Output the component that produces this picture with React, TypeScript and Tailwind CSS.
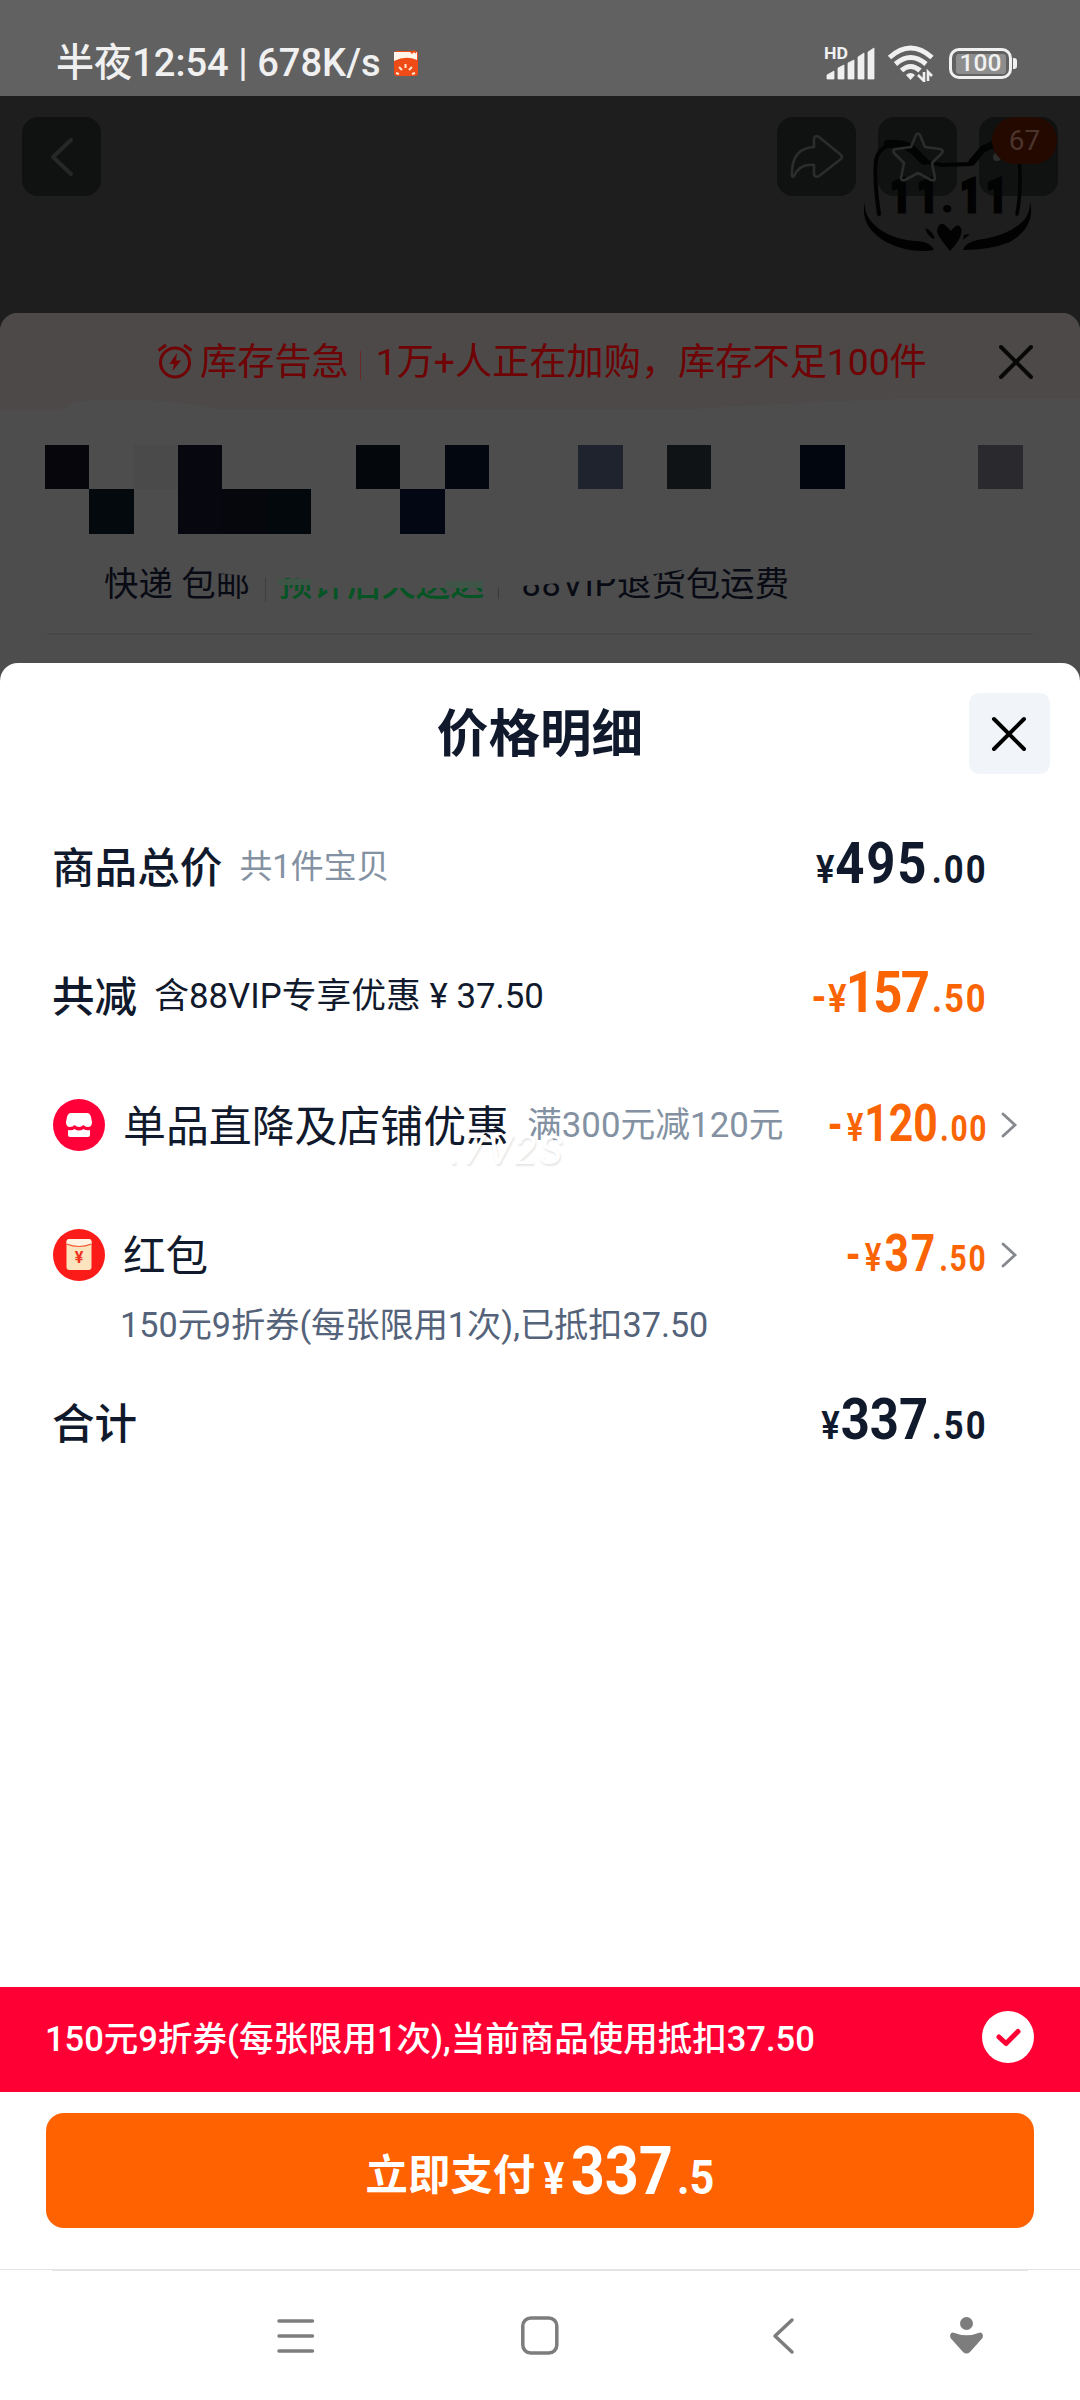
import React from "react";

const MOSAIC: string[] = [
  "bg-[#08060d]", "", "bg-[#4a4a4a]", "bg-[#06070f]", "", "", "", "bg-[#04080d]", "", "bg-[#03070f]", "", "", "bg-[#1e232d]", "", "bg-[#101315]", "", "", "bg-[#02060f]", "", "", "", "bg-[#29292e]",
  "", "bg-[#04090e]", "", "bg-[#07080f]", "bg-[#05070c]", "bg-[#03080c]", "", "", "bg-[#020713]", "", "", "", "", "", "", "", "", "", "", "", "", "",
];

function StatusBar() {
  return (
    <div className="flex h-[96px] items-start bg-[#616161] text-[#f0f0f0]">
      <div className="flex h-[48px] w-[768px] items-center pl-[56px] mt-[40px]">
        <span className="text-[38.1px] font-medium whitespace-pre">半夜12:54 | 678K/s</span>
        <svg className="ml-[12px] -mt-[2px]" width="26" height="27" viewBox="0 0 26 27">
          <rect x="1" y="1" width="24" height="25" rx="3" fill="#f04a16" />
          <path d="M1 2h23v8Q13 5 1 11z" fill="#fff5ea" />
          <path d="M17 1l2 2 2-2 2 2" stroke="#f04a16" strokeWidth="1.5" fill="none" />
          <path d="M12.500 14v4M6 17l3 3M19 17l-3 3M3 23l3 1M22 23l-3 1" stroke="#ffe9d0" strokeWidth="2" />
        </svg>
      </div>
      <div className="mt-[44px] flex items-start pl-[56px]">
        <svg width="52" height="38" viewBox="0 0 52 38" fill="#f0f0f0">
          <text x="0" y="15" fontSize="16.500" fontWeight="700" fontFamily="Roboto" textLength="24" lengthAdjust="spacingAndGlyphs">HD</text>
          <path d="M3 35v-4l7-4v8zM14 35V24l6-3v14zM24 35V19l6-3v19zM34 35V13l6-4v26zM44 35V8l6-4v31z" stroke="#f0f0f0" strokeWidth=".8" strokeLinejoin="round" />
        </svg>
        <svg className="ml-[11px]" width="48" height="38" viewBox="0 0 48 38" fill="none" stroke="#f0f0f0" strokeWidth="5">
          <path d="M2.500 13.500Q23.500-5.500 45 13.500" />
          <path d="M8.500 20Q23.500 7 39 20" />
          <path d="M14.500 26.500Q23.500 18.500 33 26.500" />
          <path d="M19 31q4.500-4 9 0l-4.500 5z" fill="#f0f0f0" stroke="none" />
          <path d="M37 28v9l-6-6M41 37v-9l4 4" strokeWidth="2.600" />
        </svg>
        <div className="ml-[14px] mt-[4px] flex items-center">
          <div className="flex h-[31px] w-[63px] items-center justify-center rounded-[10px] border-[3.5px] border-[#f0f0f0]">
            <div className="flex h-[20px] w-[50px] items-center justify-center rounded-[3px] bg-[#8d8d8d]">
              <span className="text-[24.5px] leading-none font-medium">100</span>
            </div>
          </div>
          <div className="ml-[1px] h-[11px] w-[4px] rounded-r-[3px] bg-[#f0f0f0]" />
        </div>
      </div>
    </div>
  );
}

function FestivalLogo() {
  return (
    <svg className="absolute left-[860px] top-[40px]" width="176" height="120" viewBox="0 0 176 120">
      <g fill="none" stroke="#020202" strokeLinecap="round">
        <path d="M19 78Q14 45 16 24Q20 7 40 8Q50 11 62 25L82 29L110 28L123 12L134 7" strokeWidth="4" />
        <path d="M28 8Q45 6 54 15L64 25" strokeWidth="8" />
        <path d="M112 26L123 13L134 8" strokeWidth="7" />
        <path d="M159 22Q162 52 157 78" strokeWidth="3.500" />
      </g>
      <path d="M5 66Q-1 90 26 106Q50 118 74 114Q70 105 54 105Q24 102 10 84Q4 76 5 66zM170 66Q176 90 150 106Q130 114 103 114Q106 105 124 103Q152 98 165 83Q170 76 170 66z" fill="#020202" />
      <path d="M90 115Q77 99 77 95Q79 85 85 89L91 95Q98 86 101 92Q104 100 90 115zM65 92q8 3 10 11q-6 0-10-11zM110 98l-7 6l1-5z" fill="#020202" />
      <g fill="#020202" stroke="#020202" strokeWidth="3" fontFamily="Roboto" fontWeight="900" fontSize="48">
        <text x="30" y="76" textLength="21" lengthAdjust="spacingAndGlyphs">1</text>
        <text x="57" y="76" textLength="21" lengthAdjust="spacingAndGlyphs">1</text>
        <text x="100" y="76" textLength="21" lengthAdjust="spacingAndGlyphs">1</text>
        <text x="126" y="76" textLength="21" lengthAdjust="spacingAndGlyphs">1</text>
        <text x="83" y="75" fontSize="28">.</text>
      </g>
    </svg>
  );
}

function NavButton({ children }: { children?: React.ReactNode }) {
  return <div className="relative flex h-[79px] w-[79px] items-center justify-center rounded-[16px] bg-[#020606]/50">{children}</div>;
}

function TopNav() {
  return (
    <div className="relative h-[217px] bg-[#1e1e1e] pt-[21px] pl-[22px] pr-[22px]">
      <FestivalLogo />
      <div className="relative flex justify-between">
        <NavButton>
          <svg width="26" height="40" viewBox="0 0 26 40" fill="none" stroke="#262828" strokeWidth="4" strokeLinecap="round" strokeLinejoin="round">
            <path d="M22 3L4 20L22 37" />
          </svg>
        </NavButton>
        <div className="flex gap-[22px]">
          <NavButton>
            <svg width="54" height="46" viewBox="0 0 54 46" fill="none" stroke="#2b2d2d" strokeWidth="2.600" strokeLinejoin="round">
              <path d="M2 42Q1 14 24 13V4Q26 1 29 3L51 21Q53 23 51 25L29 42Q26 44 24 41V31Q10 29 4 42Q3 44 2 42z" />
            </svg>
          </NavButton>
          <NavButton>
            <svg width="52" height="50" viewBox="0 0 52 50" fill="none" stroke="#2b2d2d" strokeWidth="2.600" strokeLinejoin="round">
              <path d="M24 3Q26 0 28 3L33 15L48 17Q52 18 50 21L40 31L43 46Q43 49 39 48L26 41L13 48Q9 49 9 46L12 31L2 21Q0 18 4 17L19 15z" />
            </svg>
          </NavButton>
          <NavButton>
            <span className="absolute left-[14px] top-[36px] h-[8px] w-[8px] rounded-full bg-[#2b2d2d]" />
            <span className="absolute left-[13px] top-0 flex h-[47px] w-[65px] items-center justify-center rounded-[23px] bg-[#240900] text-[28px] text-[#4a342c]">67</span>
          </NavButton>
        </div>
      </div>
    </div>
  );
}

function ProductCard() {
  return (
    <div className="bg-[#1e1e1e]">
      <div className="h-[350px] overflow-hidden rounded-t-[18px] bg-[#4d4d4d]">
        <div className="relative h-[98px] bg-[#4d4948]">
          <svg className="absolute left-0 top-[84px]" width="1080" height="14" viewBox="0 0 1080 14">
            <path d="M0 14V13H62Q72 3 90 3Q165 0 220 12H690Q860 2 900 2H1080V14z" fill="#4d4d4d" />
          </svg>
          <div className="relative flex h-[99px] items-center text-[37.2px] text-[#6e0205]">
            <svg className="ml-[157px] -mt-[3px]" width="36" height="36" viewBox="0 0 36 36" fill="none" stroke="#6e0205" strokeWidth="3">
              <circle cx="18" cy="19.500" r="14.500" />
              <path d="M1.500 7.500L9 2M34.500 7.500L27 2" />
              <path d="M20 10L12.500 21H17L15.500 28L24 17.500H19z" fill="#6e0205" stroke="none" />
            </svg>
            <span className="ml-[7px]">库存告急</span>
            <span className="ml-[11px] h-[29px] w-px bg-[#662a2a] mt-[6px]" />
            <span className="ml-[15px] whitespace-nowrap">1万+人正在加购，库存不足100件</span>
            <svg className="absolute left-[998px] top-[31px]" width="36" height="36" viewBox="0 0 36 36" stroke="#080808" strokeWidth="4" strokeLinecap="round">
              <path d="M3 3L33 33M33 3L3 33" />
            </svg>
          </div>
        </div>
        <div className="ml-[44.7px] mt-[33.500px] grid w-[977.9px] grid-cols-22">
          {MOSAIC.map((tone, i) => (
            <div key={i} className={"h-[44.5px] " + tone} />
          ))}
        </div>
        <div className="relative mt-[23px] h-[56px]">
          <div className="flex h-[56px] items-center text-[34.4px] whitespace-pre text-[#080a14]">
            <span className="ml-[104px]">快递 包邮</span>
            <span className="ml-[15px] mt-[10px] h-[24px] w-px bg-[#3e3e3e]" />
            <span className="ml-[12px] font-medium text-[#045424]">预计后天送达</span>
            <span className="ml-[14px] mt-[12px] h-[16px] w-px bg-[#3a3a3a]" />
            <span className="ml-[22px] mt-[1px]"><span className="tracking-[0.8px]">88VIP</span>退货包运费</span>
          </div>
          <svg className="absolute left-0 top-0" width="1080" height="40" viewBox="0 0 1080 40">
            <path d="M215 0V16L262 20L310 22V31H495L522 29L600 23L640 20L655 17L700 10L715 0z" fill="#4d4d4d" />
            <path d="M278 22h33v6h-33zM446 24h37v7h-37z" fill="#3f5547" />
          </svg>
        </div>
        <div className="mx-[47px] mt-[20px] h-[2px] bg-[#474747]" />
      </div>
    </div>
  );
}

type PriceProps = { sign?: boolean; yuan: string; cents: string; compact?: boolean; tracking: string };

function Price({ sign, yuan, cents, compact, tracking }: PriceProps) {
  const tone = sign ? "text-[#fb6404]" : "text-[#111a2c]";
  const shift = compact ? " -translate-y-[1px] scale-x-[0.82]" : " -translate-y-[3px] scale-x-[0.9]";
  return (
    <span className={"flex origin-right items-baseline leading-none font-bold whitespace-nowrap " + tone + shift}>
      {sign && <span className={compact ? "mr-[5px] text-[46px]" : "mr-[2px] text-[42px]"}>-</span>}
      <span className={compact ? "mr-[4px] text-[38px] font-semibold" : "mr-[1px] text-[38.5px] font-semibold"}>¥</span>
      <span className={(compact ? "text-[52px] " : "text-[56.5px] ") + tracking}>{yuan}</span>
      <span className={compact ? "ml-[3px] text-[36.5px] tracking-[2px] -mr-[2px]" : "ml-[4px] text-[38.5px] tracking-[2.2px] -mr-[2px]"}>{cents}</span>
    </span>
  );
}

function Chevron() {
  return (
    <svg className="ml-[14px]" width="18" height="26" viewBox="0 0 18 26" fill="none" stroke="#85888d" strokeWidth="2.800" strokeLinecap="round">
      <path d="M3 2L15 13L3 24" />
    </svg>
  );
}

function Row({ children, price, arrow }: { children: React.ReactNode; price: React.ReactNode; arrow?: boolean }) {
  return (
    <div className="flex h-[60px] items-center justify-between pl-[53px] whitespace-pre text-[#111a2c]">
      <div className="flex items-center">{children}</div>
      <div className={"flex items-center " + (arrow ? "pr-[62px]" : "pr-[94px]")}>
        {price}
        {arrow && <Chevron />}
      </div>
    </div>
  );
}

function StoreIcon() {
  return (
    <svg width="52" height="52" viewBox="0 0 52 52">
      <circle cx="26" cy="26" r="26" fill="#ff0038" />
      <path d="M18 14H34Q37 14 38 18L39 23Q39 28 35 28Q32 28 30.500 26Q26 30 21.500 26Q20 28 17 28Q13 28 13 23L14 18Q15 14 18 14z" fill="#fff" />
      <path d="M15 31Q19 32 21.500 30Q26 33 30.500 30Q33 32 37 31V36Q37 38 35 38H17Q15 38 15 36z" fill="#fff" />
    </svg>
  );
}

function EnvelopeIcon() {
  return (
    <svg width="52" height="52" viewBox="0 0 52 52">
      <circle cx="26" cy="26" r="26" fill="#fb1b18" />
      <rect x="13.500" y="10" width="25" height="31" rx="3" fill="#fbe3bd" />
      <path d="M13.500 15V13Q13.500 10 16.500 10H35.500Q38.500 10 38.500 13V15Q26 20 13.500 15z" fill="#fff4e3" />
      <path d="M13.500 15Q26 20 38.500 15" stroke="#f2552f" strokeWidth="1.200" fill="none" />
      <text x="26" y="34" textAnchor="middle" fontFamily="Roboto" fontWeight="700" fontSize="16" fill="#f0301c">¥</text>
    </svg>
  );
}

function PriceSheet() {
  return (
    <div className="bg-[#4d4d4d]">
      <div className="relative h-[1324px] rounded-t-[18px] bg-white">
        <div className="flex h-[141px] items-center justify-between pr-[30px] pl-[111px]">
          <span />
          <h1 className="mt-[3px] text-[51.6px] font-bold text-[#111a2c]">价格明细</h1>
          <div className="flex h-[81px] w-[81px] items-center justify-center rounded-[10px] bg-[#f1f5f9]">
            <svg width="38" height="38" viewBox="0 0 38 38" stroke="#000" strokeWidth="4" strokeLinecap="round">
              <path d="M4 4L34 34M34 4L4 34" />
            </svg>
          </div>
        </div>
        <div className="mt-[33px] flex flex-col">
          <Row price={<Price yuan="495" cents=".00" tracking="tracking-[2px]" />}>
            <span className="mt-[3px] -ml-[1px] text-[42.6px] font-medium">商品总价</span>
            <span className="ml-[17px] text-[32.9px] text-[#8391a2]">共1件宝贝</span>
          </Row>
          <div className="mt-[69px]">
            <Row price={<Price sign yuan="157" cents=".50" tracking="-ml-[2px] tracking-[-1.8px]" />}>
              <span className="mt-[3px] -ml-[1px] text-[42.6px] font-medium">共减</span>
              <span className="ml-[17px] text-[34.8px]">含88VIP专享优惠 ¥ 37.50</span>
            </Row>
          </div>
          <div className="mt-[69px]">
            <Row arrow price={<Price sign compact yuan="120" cents=".00" tracking="-ml-[3px] tracking-[0px]" />}>
              <StoreIcon />
              <span className="mt-[4px] ml-[18px] text-[42.9px]">单品直降及店铺优惠</span>
              <span className="ml-[18px] text-[34.8px] text-[#8391a2]">满300元减120元</span>
            </Row>
          </div>
          <div className="mt-[70px]">
            <Row arrow price={<Price sign compact yuan="37" cents=".50" tracking="tracking-[2px]" />}>
              <EnvelopeIcon />
              <span className="mt-[3px] ml-[18px] text-[42.6px]">红包</span>
            </Row>
          </div>
          <div className="mt-[16px] flex h-[50px] items-center pl-[120px] text-[34.2px] text-[#54637a]">150元9折券(每张限用1次),已抵扣37.50</div>
          <div className="mt-[42px]">
            <Row price={<Price yuan="337" cents=".50" tracking="tracking-[0px]" />}>
              <span className="mt-[3px] -ml-[1px] text-[42.6px] font-medium">合计</span>
            </Row>
          </div>
        </div>
        <span className="absolute left-[450px] top-[467px] text-[41px] leading-none tracking-[2px] text-white italic [text-shadow:1px_2px_2px_rgba(0,0,0,0.1)]">.7V2S</span>
      </div>
    </div>
  );
}

function Footer() {
  return (
    <div className="bg-white">
      <div className="flex h-[105px] items-center justify-between bg-[#ff0035] pl-[45px] pr-[46px] text-white">
        <span className="text-[34.5px] font-medium">150元9折券(每张限用1次),当前商品使用抵扣37.50</span>
        <svg className="mb-[5px]" width="52" height="52" viewBox="0 0 52 52" fill="none">
          <circle cx="26" cy="26" r="26" fill="#fff" />
          <path d="M17 26L24 32.500L36 20.500" stroke="#ff0035" strokeWidth="5" strokeLinecap="round" strokeLinejoin="round" />
        </svg>
      </div>
      <div className="mx-[46px] mt-[21px] flex h-[115px] items-center justify-center rounded-[18px] bg-[#ff6200] text-white">
        <span className="flex translate-y-[1px] items-baseline leading-none font-bold">
          <span className="-translate-y-[4px] text-[42.4px]">立即支付</span>
          <span className="-mr-[2px] ml-[7px] scale-x-[0.85] text-[45px]">¥</span>
          <span className="-mx-[5px] ml-[1px] scale-x-[0.9] text-[66px]">337</span>
          <span className="-mr-[4px] ml-[3px] origin-left scale-x-[0.9] text-[48px]">.5</span>
        </span>
      </div>
      <div className="mt-[41px] h-px bg-[#e4e4e4]" />
      <div className="mx-[52px] h-px bg-[#e4e4e4]" />
    </div>
  );
}

function SystemNav() {
  return (
    <div className="flex h-[129px] items-start bg-white pt-[43px]">
      <svg className="ml-[275px]" width="42" height="42" viewBox="0 0 42 42" stroke="#7d7d7d" strokeWidth="3.500" strokeLinecap="round">
        <path d="M4 7H37.500M4 22H37.500M4 37H37.500" />
      </svg>
      <svg className="ml-[202px]" width="42" height="42" viewBox="0 0 42 42" fill="none" stroke="#7d7d7d" strokeWidth="3.500">
        <rect x="3.800" y="4" width="34" height="35" rx="8" />
      </svg>
      <svg className="ml-[210px]" width="26" height="42" viewBox="0 0 26 42" fill="none" stroke="#7d7d7d" strokeWidth="3.500" strokeLinecap="round" strokeLinejoin="round">
        <path d="M21 6L4 22L21 38" />
      </svg>
      <svg className="ml-[150px]" width="38" height="42" viewBox="0 0 38 42" fill="#7d7d7d">
        <circle cx="19.500" cy="9.500" r="6.500" />
        <path d="M6 18.500Q19.500 24 33 18.500Q37 19 35.500 24L23 38Q19.500 41 16 38L3.500 24Q2 19 6 18.500z" />
      </svg>
    </div>
  );
}

export default function App() {
  return (
    <div className="flex h-[2400px] w-[1080px] flex-col overflow-hidden bg-white font-['Roboto','Noto_Sans_CJK_SC',sans-serif]">
      <StatusBar />
      <TopNav />
      <ProductCard />
      <PriceSheet />
      <Footer />
      <SystemNav />
    </div>
  );
}
